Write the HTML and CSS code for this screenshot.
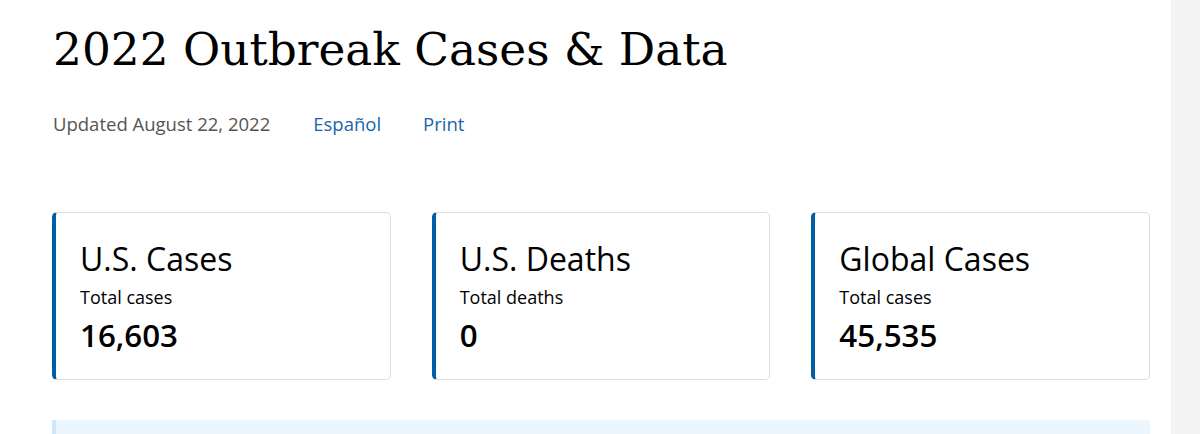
FILE: index.html
```html
<!DOCTYPE html>
<html lang="en">
<head>
<meta charset="utf-8">
<title>2022 Outbreak Cases &amp; Data</title>
<link rel="stylesheet" href="styles.css">
</head>
<body>
<div class="page">
  <main class="content">
    <h1 class="title">2022 Outbreak Cases &amp; Data</h1>
    <div class="meta">
      <span class="updated">Updated August 22, 2022</span>
      <a class="meta-link" href="#">Español</a>
      <a class="meta-link" href="#">Print</a>
    </div>
    <div class="cards">
      <div class="card">
        <div class="card-title">U.S. Cases</div>
        <div class="card-label">Total cases</div>
        <div class="card-value">16,603</div>
      </div>
      <div class="card">
        <div class="card-title">U.S. Deaths</div>
        <div class="card-label">Total deaths</div>
        <div class="card-value">0</div>
      </div>
      <div class="card">
        <div class="card-title">Global Cases</div>
        <div class="card-label">Total cases</div>
        <div class="card-value">45,535</div>
      </div>
    </div>
    <div class="callout"></div>
  </main>
  <aside class="side"></aside>
</div>
</body>
</html>
```
FILE: styles.css
```css
html, body {
  margin: 0;
  padding: 0;
  background: #fff;
}
body {
  font-family: "Open Sans", "Noto Sans", sans-serif;
  color: #000;
  height: 434px;
  overflow: hidden;
}
.page {
  display: flex;
  height: 434px;
}
.content {
  width: 1098px;
  padding-left: 52px;
  padding-right: 21px;
  padding-top: 18px;
}
.side {
  flex: 1;
  background: #f4f4f4;
}
.title {
  font-family: "DejaVu Serif", "Liberation Serif", serif;
  font-weight: normal;
  font-size: 45.4px;
  line-height: 64px;
  margin: 0 0 0 1px;
  color: #000;
}
.meta {
  display: flex;
  align-items: center;
  margin-top: 30px;
  margin-left: 1px;
  font-size: 18.5px;
  line-height: 24px;
}
.updated {
  color: #555;
  margin-right: 43px;
}
.meta-link {
  color: #1a64ad;
  text-decoration: none;
  margin-right: 42px;
}
.cards {
  display: flex;
  gap: 41px;
  margin-top: 76px;
}
.card {
  flex: 1;
  height: 168px;
  box-sizing: border-box;
  border: 1px solid #ddd;
  border-left: 4px solid #005ea2;
  border-radius: 5px;
  padding: 24px 24px 0 24px;
}
.card-title {
  font-size: 32px;
  line-height: 44px;
}
.card-label {
  font-size: 18px;
  line-height: 24px;
  margin-top: 4px;
}
.card-value {
  font-size: 31.3px;
  font-weight: 600;
  line-height: 44px;
  margin-top: 4px;
}
.callout {
  margin-top: 40px;
  height: 14px;
  background: #ecf6fe;
  border-left: 4px solid #cde8fb;
}
```
